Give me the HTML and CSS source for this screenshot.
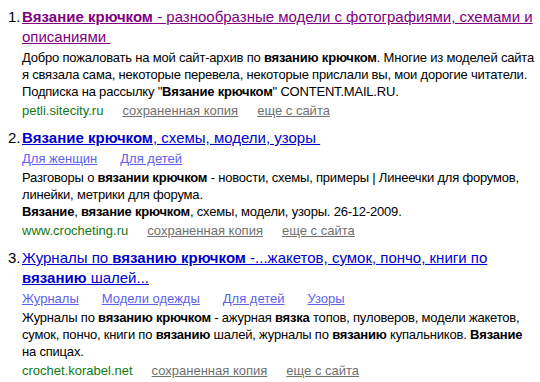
FILE: index.html
```html
<html>
<head>
    <title>Вязание крючком</title>
    <link rel="stylesheet" href="styles.css">
</head>
<body>
    <div class="results">
        <!-- Result 1 -->
        <div class="result">
            <span class="num">1.</span>
            <div class="body">
                <a class="title visited" href="#"><b>Вязание крючком</b> - разнообразные модели с фотографиями, схемами и описаниями&nbsp;</a>
                <div class="snippet">Добро пожаловать на мой сайт-архив по <b>вязанию крючком</b>. Многие из моделей сайта я связала сама, некоторые перевела, некоторые прислали вы, мои дорогие читатели. Подписка на рассылку "<b>Вязание крючком</b>" CONTENT.MAIL.RU.</div>
                <div class="meta">
                    <span class="url">petli.sitecity.ru</span>
                    <a class="extra" href="#">сохраненная копия</a>
                    <a class="extra" href="#">еще с сайта</a>
                </div>
            </div>
        </div>

        <!-- Result 2 -->
        <div class="result">
            <span class="num">2.</span>
            <div class="body">
                <a class="title" href="#"><b>Вязание крючком</b>, схемы, модели, узоры&nbsp;</a>
                <div class="sitelinks">
                    <a href="#">Для женщин</a>
                    <a href="#">Для детей</a>
                </div>
                <div class="snippet">Разговоры о <b>вязании крючком</b> - новости, схемы, примеры | Линеечки для форумов, линейки, метрики для форума.<br><b>Вязание</b>, <b>вязание крючком</b>, схемы, модели, узоры. 26-12-2009.</div>
                <div class="meta">
                    <span class="url">www.crocheting.ru</span>
                    <a class="extra" href="#">сохраненная копия</a>
                    <a class="extra" href="#">еще с сайта</a>
                </div>
            </div>
        </div>

        <!-- Result 3 -->
        <div class="result">
            <span class="num">3.</span>
            <div class="body">
                <a class="title" href="#">Журналы по <b>вязанию крючком</b> -...жакетов, сумок, пончо, книги по <b>вязанию</b> шалей...</a>
                <div class="sitelinks">
                    <a href="#">Журналы</a>
                    <a href="#">Модели одежды</a>
                    <a href="#">Для детей</a>
                    <a href="#">Узоры</a>
                </div>
                <div class="snippet">Журналы по <b>вязанию крючком</b> - ажурная <b>вязка</b> топов, пуловеров, модели жакетов, сумок, пончо, книги по <b>вязанию</b> шалей, журналы по <b>вязанию</b> купальников. <b>Вязание</b> на спицах.</div>
                <div class="meta">
                    <span class="url">crochet.korabel.net</span>
                    <a class="extra" href="#">сохраненная копия</a>
                    <a class="extra" href="#">еще с сайта</a>
                </div>
            </div>
        </div>
    </div>
</body>
</html>
```

FILE: styles.css
```css
body {
    font-family: "Liberation Sans", Arial, sans-serif;
    background-color: #fff;
    color: #000;
    margin: 0;
    padding: 7px 6px 0 8px;
}

.result {
    display: flex;
    margin-bottom: 9px;
}

.num {
    width: 14px;
    flex-shrink: 0;
    font-size: 15px;
    line-height: 20px;
}

.body {
    flex: 1;
    min-width: 0;
}

.title {
    font-size: 15px;
    line-height: 20px;
    color: #0000cc;
    text-decoration: underline;
}

.title.visited {
    color: #800080;
}

.sitelinks {
    display: flex;
    gap: 23px;
    font-size: 13px;
    line-height: 17px;
    margin-top: 2px;
}

.sitelinks a {
    color: #6060ee;
}

.snippet {
    font-size: 13px;
    line-height: 17px;
    letter-spacing: -0.2px;
    margin-top: 2px;
}

.meta {
    display: flex;
    gap: 19px;
    font-size: 13px;
    line-height: 17px;
    margin-top: 2px;
}

.url {
    color: #127812;
}

.extra {
    color: #707070;
}
```
